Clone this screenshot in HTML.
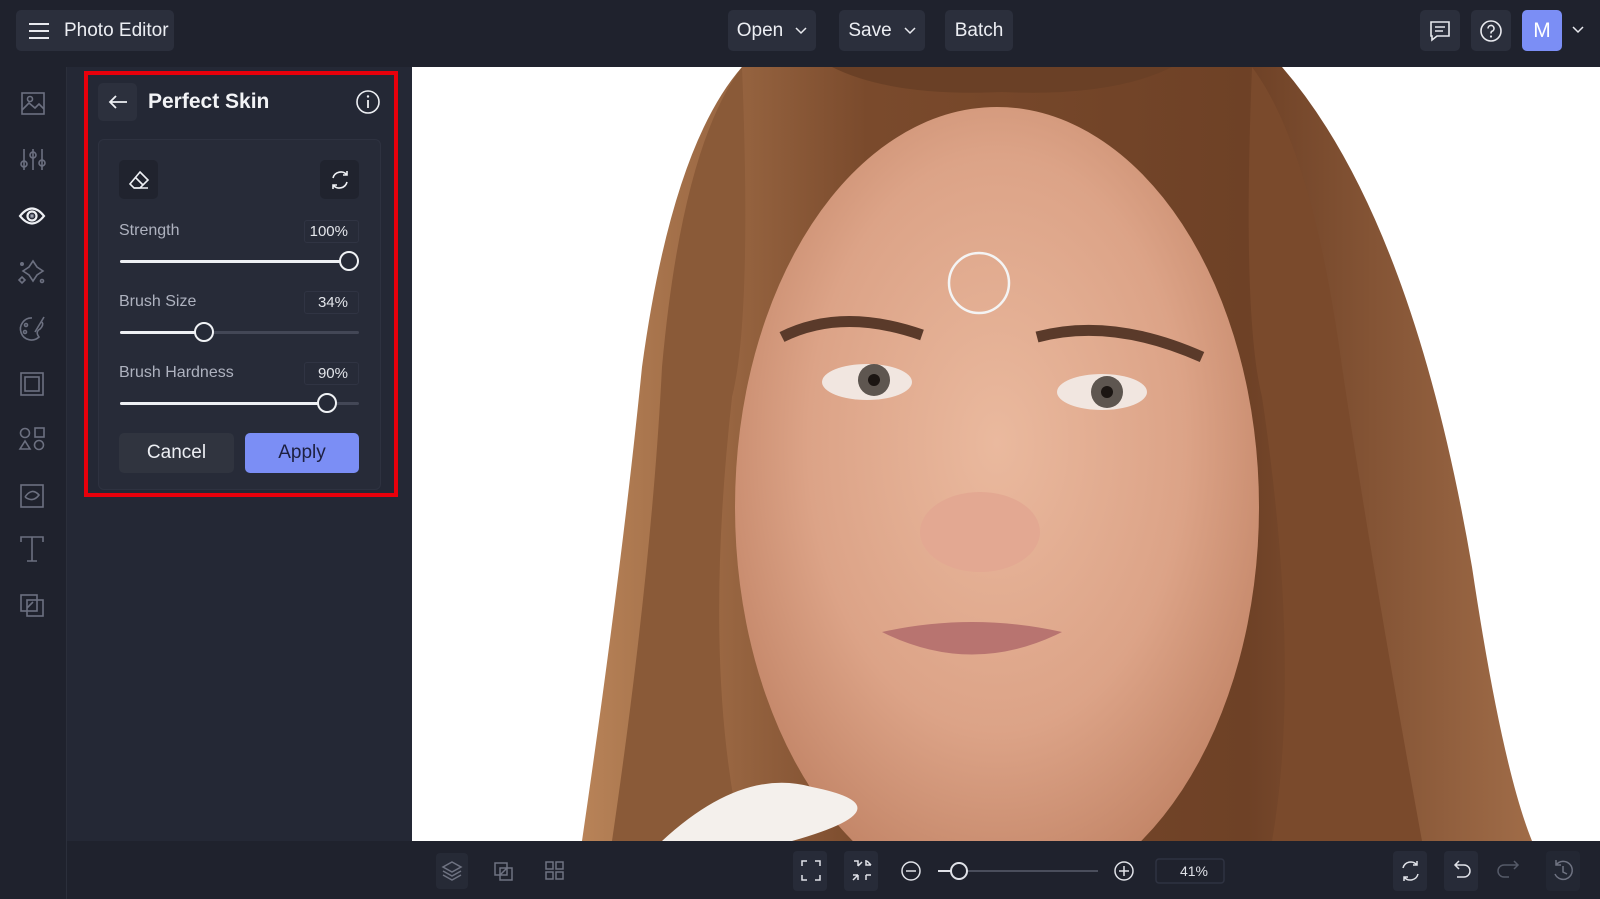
<!DOCTYPE html>
<html><head><meta charset="utf-8"><style>
*{box-sizing:border-box;margin:0;padding:0}
body{width:1600px;height:899px;overflow:hidden;background:#1f222d;font-family:"Liberation Sans",sans-serif;color:#e8e9ee;position:relative}
.abs{position:absolute}
.btn{position:absolute;background:#2b2f3c;border-radius:5px;display:flex;align-items:center;justify-content:center;font-size:19px;color:#eceef3}
svg{display:block}
.ic{position:absolute;transform:translate(-50%,-50%)}
.lbl{position:absolute;font-size:16px;color:#aeb2bf}
.val{position:absolute;width:55px;height:23px;border:1px solid #303443;border-radius:3px;font-size:15px;color:#e3e5ea;text-align:right;padding-right:10px;line-height:21px}
.track{position:absolute;height:3px;background:#434756;border-radius:2px}
.fill{position:absolute;height:3px;background:#eef0f4;border-radius:2px}
.knob{position:absolute;width:20px;height:20px;border:2.5px solid #f0f2f5;border-radius:50%;background:#262a37;transform:translate(-50%,-50%)}
</style></head><body>
<div class="abs" style="left:0;top:0;width:1600px;height:67px;background:#1f222d"></div>
<div class="btn" style="left:16px;top:10px;width:158px;height:41px;justify-content:flex-start;padding-left:12px">
<svg width="22" height="18"><path d="M1 2H21M1 9H21M1 16H21" stroke="#e8e9ee" stroke-width="2"/></svg><span style="margin-left:14px">Photo Editor</span></div>
<div class="btn" style="left:728px;top:10px;width:88px;height:41px">Open <svg width="12" height="8" style="margin-left:12px"><path d="M1 1L6 6L11 1" stroke="#e8e9ee" stroke-width="1.5" fill="none"/></svg></div>
<div class="btn" style="left:839px;top:10px;width:86px;height:41px">Save <svg width="12" height="8" style="margin-left:12px"><path d="M1 1L6 6L11 1" stroke="#e8e9ee" stroke-width="1.5" fill="none"/></svg></div>
<div class="btn" style="left:945px;top:10px;width:68px;height:41px">Batch</div>
<div class="btn" style="left:1420px;top:10px;width:40px;height:41px"><svg width="22" height="22"><path d="M2 2H20V16H8L3 20V16H2Z" stroke="#e8e9ee" stroke-width="1.6" fill="none"/><path d="M6 7H16M6 11H14" stroke="#e8e9ee" stroke-width="1.5"/></svg></div>
<div class="btn" style="left:1471px;top:10px;width:40px;height:41px"><svg width="24" height="24"><circle cx="12" cy="12" r="10" stroke="#e8e9ee" stroke-width="1.6" fill="none"/><path d="M9 9.5a3 3 0 1 1 4 2.8c-1 .4-1 1-1 2.2" stroke="#e8e9ee" stroke-width="1.6" fill="none"/><circle cx="12" cy="17.5" r="1.1" fill="#e8e9ee"/></svg></div>
<div class="btn" style="left:1522px;top:10px;width:40px;height:41px;background:#7b8ef5;font-size:21px;color:#fff">M</div>
<svg class="abs" style="left:1572px;top:26px" width="12" height="8"><path d="M1 1L6 6L11 1" stroke="#e8e9ee" stroke-width="1.5" fill="none"/></svg>

<div class="abs" style="left:0;top:67px;width:67px;height:832px;background:#1f222d;border-right:1px solid #2b2f3b"></div>
<svg class="abs" style="left:0;top:67px" width="67" height="570" fill="none" stroke="#6c7080" stroke-width="1.6">
<rect x="22" y="26" width="22" height="21"/><path d="M22 43L29 36L35 41L39 37L44 42"/><circle cx="30" cy="32" r="2.5"/>
<path d="M24 82V103M33 82V103M42 82V103"/><circle cx="24" cy="97" r="3"/><circle cx="33" cy="88" r="3"/><circle cx="42" cy="96" r="3"/>
<path d="M20 149Q32 134 44 149Q32 164 20 149Z" stroke="#eef0f4" stroke-width="2.2"/><circle cx="32" cy="149" r="4.5" stroke="#eef0f4" stroke-width="2.2"/><circle cx="32" cy="149" r="1.5" fill="#eef0f4"/>
<path d="M33 194L37 200L43 204L37 208L33 214L29 208L23 204L29 200Z"/><path d="M22 210L25 213L22 216L19 213Z"/><circle cx="22" cy="197" r="1.2" fill="#6c7080"/><circle cx="42" cy="214" r="1.5"/>
<path d="M32 251A11 11 0 1 0 39 270Q35 265 40 262Q44 258 42 255"/><circle cx="26" cy="258" r="1.5"/><circle cx="25" cy="265" r="1.5"/><path d="M35 265L44 250"/>
<rect x="21" y="306" width="22" height="22"/><rect x="25" y="310" width="14" height="14"/>
<circle cx="25" cy="366" r="4.5"/><rect x="35" y="361" width="9" height="9"/><path d="M25 374L20 382H30Z"/><circle cx="39" cy="378" r="4.5"/>
<rect x="21" y="418" width="22" height="22"/><path d="M25 430Q32 420 39 428Q33 436 25 430"/>
<path d="M21 475V470H43V475M32 470V494M27 494H37"/>
<rect x="21" y="528" width="16" height="16"/><rect x="27" y="533" width="16" height="16"/><path d="M27 541L33 535"/>
</svg>

<div class="abs" style="left:67px;top:67px;width:345px;height:774px;background:#242835"></div>
<div class="abs" style="left:84px;top:71px;width:314px;height:426px;border:4px solid #e8000b"></div>
<div class="btn" style="left:98px;top:83px;width:39px;height:38px;background:#2c303d"><svg width="20" height="16"><path d="M19 8H2M8 2L2 8L8 14" stroke="#eef0f4" stroke-width="1.8" fill="none"/></svg></div>
<div class="abs" style="left:148px;top:90px;font-size:21px;font-weight:bold;color:#f2f3f6">Perfect Skin</div>
<svg class="ic" style="left:368px;top:102px" width="26" height="26"><circle cx="13" cy="13" r="11" stroke="#eef0f4" stroke-width="1.6" fill="none"/><path d="M13 11V19" stroke="#eef0f4" stroke-width="1.8"/><circle cx="13" cy="7.5" r="1.2" fill="#eef0f4"/></svg>
<div class="abs" style="left:98px;top:139px;width:283px;height:351px;background:#272b38;border:1px solid #2e3240;border-radius:6px"></div>
<div class="btn" style="left:119px;top:160px;width:39px;height:39px;background:#20232e"><svg width="22" height="20" fill="none" stroke="#eef0f4" stroke-width="1.6"><path d="M12 2L20 10L12 18H6L2 14Z"/><path d="M7 7L15 15M6 18H20"/></svg></div>
<div class="btn" style="left:320px;top:160px;width:39px;height:39px;background:#20232e"><svg width="22" height="22" fill="none" stroke="#eef0f4" stroke-width="1.6"><path d="M4 9A8 8 0 0 1 18 6M18 2V6H14M18 13A8 8 0 0 1 4 16M4 20V16H8"/></svg></div>

<div class="lbl" style="left:119px;top:222px">Strength</div><div class="val" style="left:304px;top:220px">100%</div>
<div class="track" style="left:120px;top:260px;width:239px"></div><div class="fill" style="left:120px;top:260px;width:229px"></div><div class="knob" style="left:349px;top:261px"></div>
<div class="lbl" style="left:119px;top:293px">Brush Size</div><div class="val" style="left:304px;top:291px">34%</div>
<div class="track" style="left:120px;top:331px;width:239px"></div><div class="fill" style="left:120px;top:331px;width:84px"></div><div class="knob" style="left:204px;top:332px"></div>
<div class="lbl" style="left:119px;top:364px">Brush Hardness</div><div class="val" style="left:304px;top:362px">90%</div>
<div class="track" style="left:120px;top:402px;width:239px"></div><div class="fill" style="left:120px;top:402px;width:207px"></div><div class="knob" style="left:327px;top:403px"></div>
<div class="btn" style="left:119px;top:433px;width:115px;height:40px;background:#30343f">Cancel</div>
<div class="btn" style="left:245px;top:433px;width:114px;height:40px;background:#7b8ef5;color:#1d2040">Apply</div>

<div class="abs" style="left:412px;top:67px;width:1188px;height:774px;background:#fff;overflow:hidden">
<svg width="1188" height="774">
<defs>
<radialGradient id="sk" cx="50%" cy="42%" r="60%"><stop offset="0" stop-color="#eab99e"/><stop offset="0.6" stop-color="#dca387"/><stop offset="1" stop-color="#c08264"/></radialGradient>
<linearGradient id="hr" x1="0" y1="0" x2="1" y2="0"><stop offset="0" stop-color="#b88358"/><stop offset="0.3" stop-color="#7a4a2c"/><stop offset="0.7" stop-color="#6e4126"/><stop offset="1" stop-color="#a06c48"/></linearGradient>
</defs>
<path d="M330 0H870Q1000 150 1060 500Q1090 700 1120 774H170Q210 500 230 300Q260 80 330 0Z" fill="url(#hr)"/>
<ellipse cx="585" cy="440" rx="262" ry="400" fill="url(#sk)"/>
<path d="M420 0H760Q700 30 590 25Q480 30 420 0Z" fill="#6a4026"/>
<path d="M330 0Q340 250 320 330Q290 600 330 774H200Q240 500 250 300Q270 80 330 0Z" fill="#8a5a38"/>
<path d="M840 0Q830 250 850 330Q890 600 860 774H1010Q960 500 930 300Q900 80 840 0Z" fill="#7a4a2c"/>
<path d="M370 270Q430 240 510 268" stroke="#5a3a2a" stroke-width="11" fill="none"/>
<path d="M625 270Q700 250 790 290" stroke="#5a3a2a" stroke-width="11" fill="none"/>
<ellipse cx="455" cy="315" rx="45" ry="18" fill="#f1e6e0"/><circle cx="462" cy="313" r="16" fill="#5e5650"/><circle cx="462" cy="313" r="6" fill="#1b1512"/>
<ellipse cx="690" cy="325" rx="45" ry="18" fill="#f1e6e0"/><circle cx="695" cy="325" r="16" fill="#5e5650"/><circle cx="695" cy="325" r="6" fill="#1b1512"/>
<ellipse cx="568" cy="465" rx="60" ry="40" fill="#e3a892"/>
<path d="M470 565Q560 545 650 565Q560 610 470 565Z" fill="#b87470"/>
<path d="M250 774Q330 700 400 720Q500 740 380 774Z" fill="#f4f0ec"/>
<circle cx="567" cy="216" r="30" stroke="#f4f4f4" stroke-width="2.5" fill="none"/>
</svg></div>

<div class="abs" style="left:412px;top:841px;width:1188px;height:58px;background:#1f222d"></div>
<svg class="abs" style="left:412px;top:841px" width="1188" height="58" fill="none" stroke="#6f7382" stroke-width="1.5">
<rect x="24" y="12" width="32" height="36" rx="4" fill="#262a36" stroke="none"/>
<path d="M40 21L49 26L40 31L31 26Z M31 30L40 35L49 30 M31 34L40 39L49 34"/>
<rect x="83" y="22" width="12" height="12"/><rect x="88" y="27" width="12" height="12"/><path d="M88 34L95 27"/>
<rect x="134" y="21" width="7" height="7"/><rect x="144" y="21" width="7" height="7"/><rect x="134" y="31" width="7" height="7"/><rect x="144" y="31" width="7" height="7"/>
<rect x="381" y="10" width="34" height="40" rx="4" fill="#272b38" stroke="none"/><rect x="432" y="10" width="34" height="40" rx="4" fill="#272b38" stroke="none"/>
<path d="M390 25V20H395M403 20H408V25M408 34V39H403M395 39H390V34" stroke="#e0e2e8"/>
<path d="M442 20H446V25M446 25L450 21M454 19V24H459M459 24L455 20 M441 39L446 34M446 34V39M446 34H441M454 34V39M454 34H459M459 39" stroke="#e0e2e8"/>
<circle cx="499" cy="30" r="9" stroke="#e0e2e8"/><path d="M494 30H504" stroke="#e0e2e8"/>
<path d="M526 30H686" stroke="#4a4e5c" stroke-width="2"/><path d="M526 30H547" stroke="#e0e2e8" stroke-width="2"/>
<circle cx="547" cy="30" r="8" fill="#1f222d" stroke="#e0e2e8" stroke-width="2"/>
<circle cx="712" cy="30" r="9" stroke="#e0e2e8"/><path d="M707 30H717M712 25V35" stroke="#e0e2e8"/>
<rect x="744" y="18" width="68" height="24" rx="3" stroke="#2f3342"/>
<rect x="981" y="10" width="34" height="40" rx="4" fill="#272b38" stroke="none"/><rect x="1032" y="10" width="34" height="40" rx="4" fill="#272b38" stroke="none"/><rect x="1134" y="10" width="34" height="40" rx="4" fill="#232733" stroke="none"/>
<path d="M991 27A8 8 0 0 1 1005 24M1005 20V24H1001M1006 33A8 8 0 0 1 992 36M992 40V36H996" stroke="#e0e2e8"/>
<path d="M1043 24H1052A6 6 0 0 1 1052 36H1045M1047 20L1043 24L1047 28" stroke="#e0e2e8"/>
<path d="M1106 24H1092A6 6 0 0 0 1092 36H1097M1102 20L1106 24L1102 28" stroke="#555a68"/>
<path d="M1144 24A9 9 0 1 1 1143 33M1144 19V24H1149M1151 25V31L1155 33"/>
</svg>
<div class="abs" style="left:1174px;top:863px;font-size:14px;color:#dfe1e7;width:40px;text-align:center">41%</div>
</body></html>
